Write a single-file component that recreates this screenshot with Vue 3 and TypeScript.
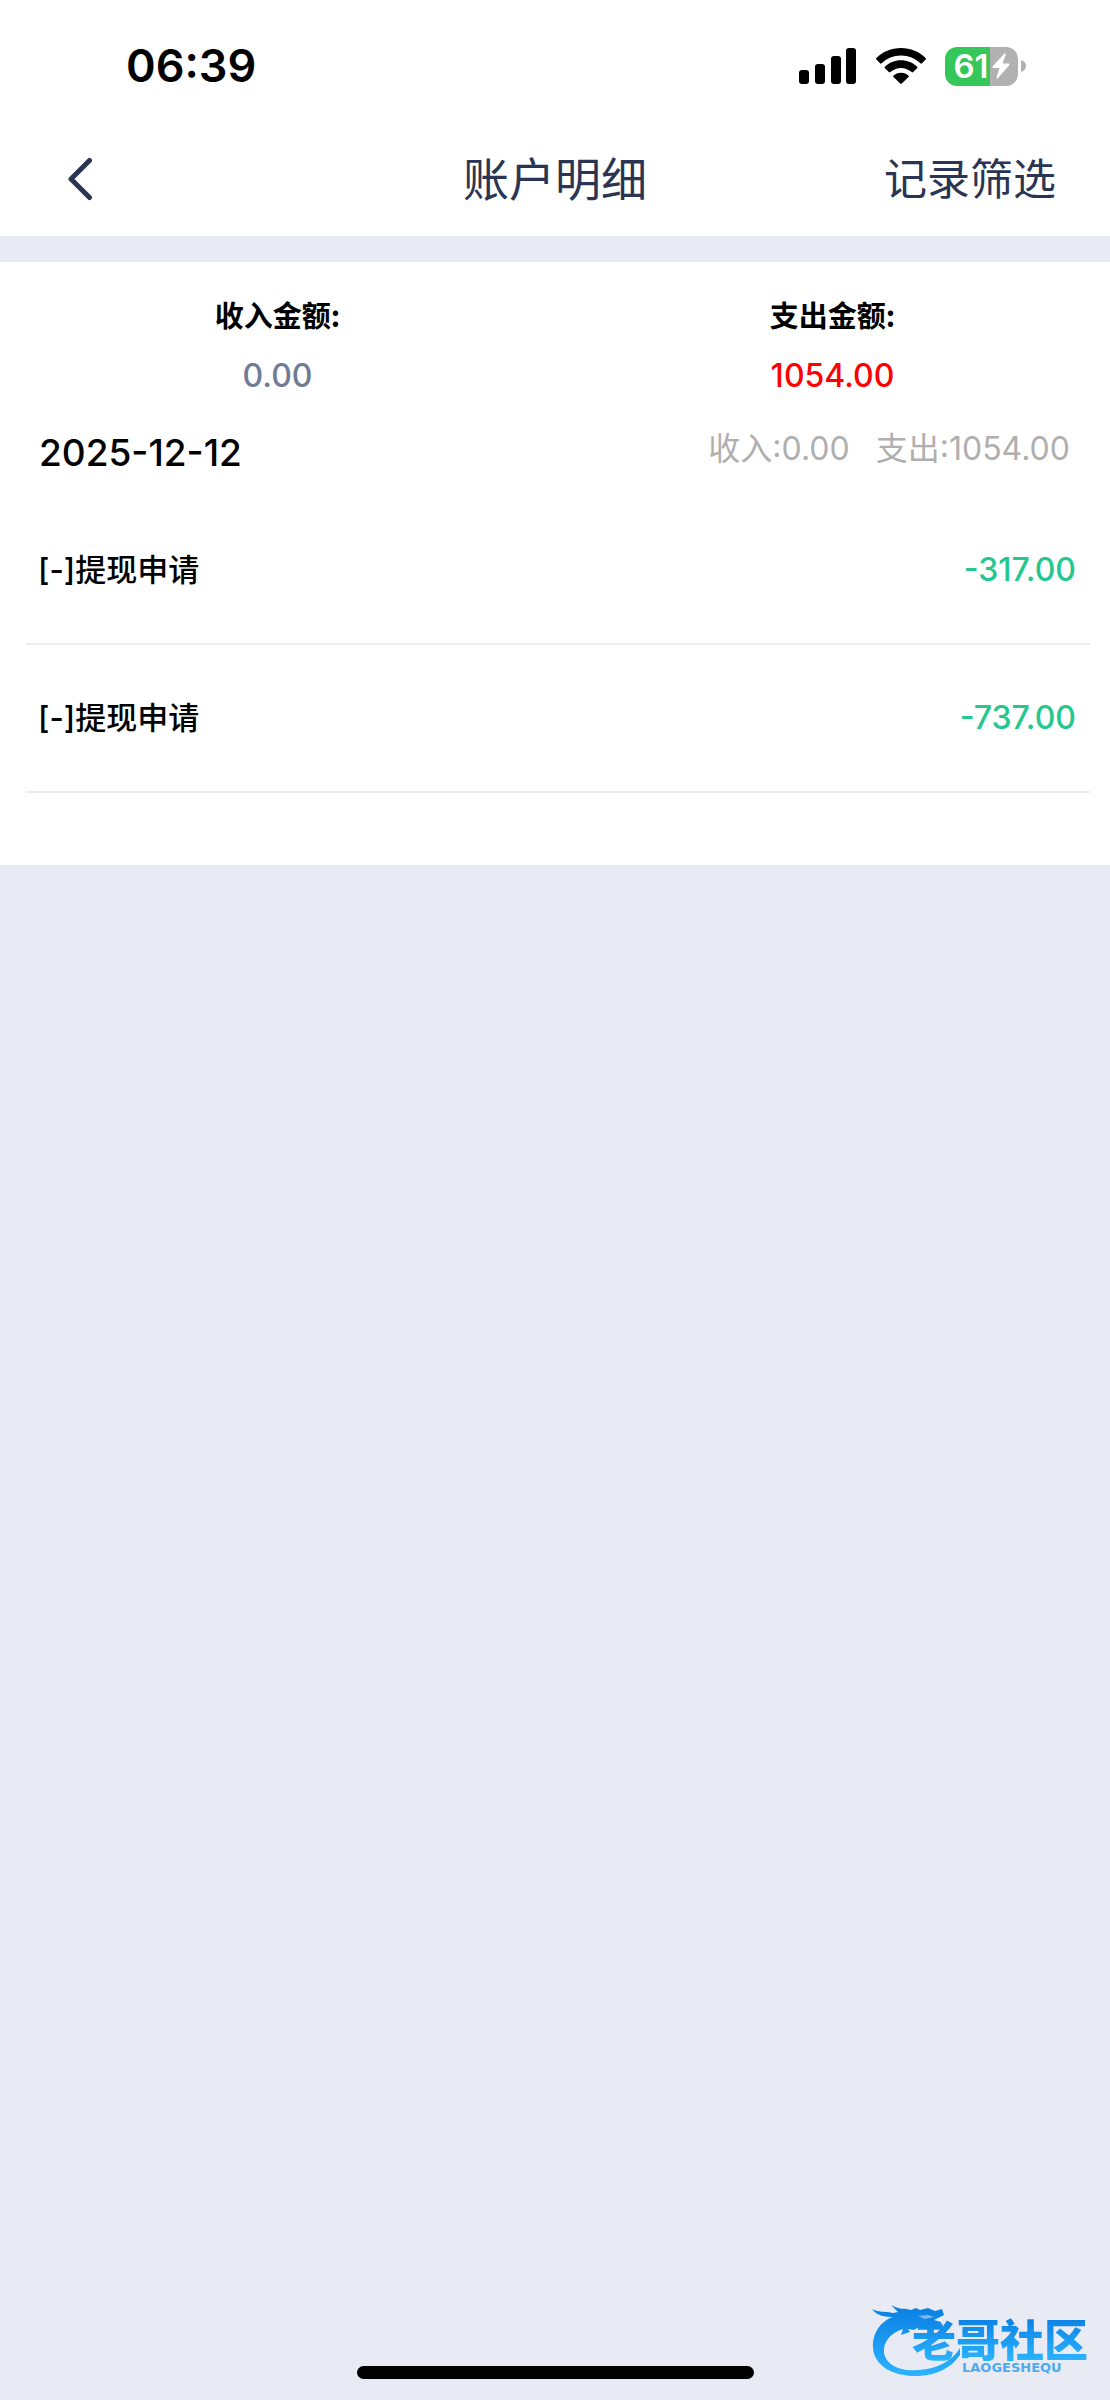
<script setup lang="ts">
interface Entry {
  id: number
  label: string
  amount: string
}

interface DayGroup {
  date: string
  income: string
  expense: string
  entries: Entry[]
}

const totals = [
  { label: '收入金额:', value: '0.00', kind: 'income' },
  { label: '支出金额:', value: '1054.00', kind: 'expense' },
]

const groups: DayGroup[] = [
  {
    date: '2025-12-12',
    income: '0.00',
    expense: '1054.00',
    entries: [
      { id: 1, label: '[-]提现申请', amount: '-317.00' },
      { id: 2, label: '[-]提现申请', amount: '-737.00' },
    ],
  },
]
</script>

<template>
  <div class="page">
    <div class="status-bar">
      <time class="clock">06:39</time>
      <div class="indicators">
        <svg class="signal" width="58" height="36" viewBox="0 0 58 36" aria-hidden="true">
          <rect x="0" y="22" width="10" height="14" rx="3" />
          <rect x="16" y="16" width="10" height="20" rx="3" />
          <rect x="32" y="8" width="10" height="28" rx="3" />
          <rect x="47" y="0" width="10" height="36" rx="3" />
        </svg>
        <svg class="wifi" width="50" height="36" viewBox="0 0 50 36" aria-hidden="true">
          <path d="M25 0C34.600 0 43.300 3.800 49.600 10C50.100 10.500 50.100 11.100 49.600 11.600L46 15.300C45.500 15.800 44.900 15.800 44.400 15.300C39.400 10.400 32.600 7.400 25 7.400S10.600 10.400 5.600 15.300C5.100 15.800 4.500 15.800 4 15.300L0.400 11.600C-0.100 11.100 -0.100 10.500 0.400 10C6.700 3.800 15.400 0 25 0Z" />
          <path d="M25 12.300C31.200 12.300 36.900 14.700 41.100 18.700C41.600 19.200 41.600 19.800 41.100 20.300L37.200 24.100C36.700 24.600 36.200 24.600 35.700 24.100C32.900 21.500 29.100 19.900 25 19.900S17.100 21.500 14.300 24.100C13.800 24.600 13.300 24.600 12.800 24.100L8.900 20.300C8.400 19.800 8.400 19.200 8.900 18.700C13.100 14.700 18.800 12.300 25 12.300Z" />
          <path d="M25 24.700C28 24.700 30.600 25.800 32.500 27.500C33 28 33 28.500 32.500 29L25.800 35.600C25.300 36.100 24.700 36.100 24.200 35.600L17.500 29C17 28.500 17 28 17.500 27.500C19.400 25.800 22 24.700 25 24.700Z" />
        </svg>
        <div class="battery">
          <div class="battery-body">
            <span>61</span>
            <svg width="18" height="26" viewBox="0 0 18 26" aria-hidden="true">
              <path d="M12.500 0.400L0.500 13.600Q0 14.800 1.200 15H7.600L4.500 24.600Q4.600 26 5.800 25.300L17.500 11.900Q18 10.700 16.800 10.500H10.500L13.800 1.500Q13.800 0 12.500 0.400Z" fill="#fff" />
            </svg>
          </div>
          <svg width="5" height="12" viewBox="0 0 5 12" aria-hidden="true">
            <path d="M0 0Q5 1.500 5 6T0 12Z" fill="#b1b1b1" />
          </svg>
        </div>
      </div>
    </div>

    <header class="nav">
      <button class="back" type="button" aria-label="返回">
        <svg width="24" height="44" viewBox="0 0 24 44" aria-hidden="true">
          <path d="M21.500 3.500L3 22L21.500 40.500" fill="none" stroke="#2a3553" stroke-width="5" stroke-linecap="round" stroke-linejoin="round" />
        </svg>
      </button>
      <h1>账户明细</h1>
      <button class="filter" type="button">记录筛选</button>
    </header>

    <main class="card">
      <dl class="totals">
        <div v-for="total in totals" :key="total.kind" class="total">
          <dt>{{ total.label }}</dt>
          <dd :class="total.kind">{{ total.value }}</dd>
        </div>
      </dl>

      <section v-for="group in groups" :key="group.date">
        <div class="day">
          <h2>{{ group.date }}</h2>
          <p class="day-sums">
            <span>收入:{{ group.income }}</span>
            <span>支出:{{ group.expense }}</span>
          </p>
        </div>
        <ul class="entries">
          <li v-for="entry in group.entries" :key="entry.id">
            <span>{{ entry.label }}</span>
            <span class="amount">{{ entry.amount }}</span>
          </li>
        </ul>
      </section>
    </main>

    <footer class="bottom">
      <div class="home-indicator"></div>
      <div class="brand">
        <svg class="dragon" width="92" height="80" viewBox="0 0 92 80" aria-hidden="true">
          <defs>
            <linearGradient id="dragon-fill" x1="0" y1="0" x2="0" y2="1">
              <stop offset="0" stop-color="#0a7ee2" />
              <stop offset="1" stop-color="#2bb4ff" />
            </linearGradient>
          </defs>
          <path fill="url(#dragon-fill)" d="M0 10C8 14 14 12 21 14L26 13L19 6C27 11 33 9 39 11L44 9L48 11L56 9L63 12L70 10L72 16L66 19L62 21L69 23L70 28L63 27L56 28L53 30L47 28L42 31L36 30L38 33L29 36L31 30C18 34 11 43 12 54C14 66 29 73 47 71C65 70 80 62 88 49V56C79 69 65 76 47 77C20 78 2 66 1 49C0 34 9 22 21 18C13 18 5 17 0 10Z" />
          <path fill="#e8ebf4" d="M46 17L56 16L62 18L53 20Z" opacity="0.500" />
        </svg>
        <div class="brand-text">
          <strong>老哥社区</strong>
          <small>LAOGESHEQU</small>
        </div>
      </div>
    </footer>
  </div>
</template>

<style>
body {
  margin: 0;
}
</style>

<style scoped>
.page {
  display: flex;
  flex-direction: column;
  min-height: 100vh;
  background: #e8ebf4;
  color: #000;
  font-family: Inter, "Noto Sans CJK SC", sans-serif;
  font-size: 32px;
  line-height: 40px;
}

h1,
h2,
p,
dl,
dd,
ul {
  margin: 0;
  padding: 0;
}

button {
  padding: 0;
  border: 0;
  background: none;
  color: inherit;
  font: inherit;
  cursor: pointer;
}

svg {
  display: block;
}

.status-bar {
  display: flex;
  align-items: center;
  justify-content: space-between;
  height: 132px;
  padding: 0 84px 0 126px;
  background: #fff;
}

.clock {
  font-size: 45px;
  font-weight: 600;
  line-height: 56px;
}

.indicators {
  display: flex;
  align-items: center;
  gap: 19px;
}

.battery {
  display: flex;
  align-items: center;
  gap: 3px;
}

.battery-body {
  display: flex;
  align-items: center;
  justify-content: center;
  gap: 3px;
  width: 73px;
  height: 39px;
  border-radius: 12px;
  background: linear-gradient(90deg, #35c759 62%, #b1b1b1 62%);
  color: #fff;
  font-size: 33px;
  font-weight: 600;
}

.nav {
  display: grid;
  grid-template-columns: 1fr auto 1fr;
  align-items: center;
  height: 94px;
  padding: 0 54px 10px;
  background: #fff;
  color: #2a3553;
}

.nav h1 {
  font-size: 46px;
  font-weight: 400;
  line-height: 56px;
}

.back {
  justify-self: start;
  padding: 0 14px;
}

.filter {
  justify-self: end;
  font-size: 43px;
  line-height: 60px;
}

.card {
  margin-top: 26px;
  padding-bottom: 72px;
  background: #fff;
}

.totals {
  display: grid;
  grid-template-columns: 1fr 1fr;
  padding-top: 32px;
  text-align: center;
}

.total {
  display: flex;
  flex-direction: column;
  gap: 22px;
}

.total dt {
  font-family: "Noto Sans CJK SC", sans-serif;
  font-size: 29px;
  font-weight: 700;
}

.income {
  color: #6f7c95;
}

.expense {
  color: #f00;
}

.day {
  display: flex;
  align-items: flex-start;
  justify-content: space-between;
  height: 68px;
  padding: 33px 40px 0 39px;
}

.day h2 {
  padding-top: 4px;
  font-size: 37px;
  font-weight: 500;
}

.day-sums {
  display: flex;
  gap: 26px;
  color: #afafaf;
}

.total dd,
.amount {
  font-weight: 500;
}

.entries {
  padding: 0 20px 0 26px;
  list-style: none;
}

.entries li {
  display: flex;
  align-items: center;
  justify-content: space-between;
  height: 146px;
  padding: 0 14px 0 12px;
  border-bottom: 2px solid #ececf1;
  font-size: 31px;
  font-weight: 500;
}

.entries .amount {
  color: #24c88f;
  font-size: 32px;
}

.bottom {
  display: grid;
  grid-template-columns: 1fr auto 1fr;
  align-items: end;
  margin-top: auto;
  padding-bottom: 21px;
}

.home-indicator {
  grid-column: 2;
  width: 397px;
  height: 13px;
  border-radius: 7px;
  background: #000;
}

.brand {
  display: flex;
  justify-self: end;
  padding-right: 18px;
}

.dragon {
  margin-right: -52px;
}

.brand-text {
  display: flex;
  flex-direction: column;
  width: 180px;
  padding-top: 16px;
}

.brand-text strong {
  background: linear-gradient(#0a7ee2, #2bb4ff);
  background-clip: text;
  color: transparent;
  font-family: "Noto Sans CJK SC", sans-serif;
  font-size: 44px;
  font-weight: 900;
  line-height: 46px;
}

.brand-text small {
  padding-left: 50px;
  color: #4fa9ee;
  font-family: "DejaVu Sans", sans-serif;
  font-size: 13px;
  font-weight: 700;
  line-height: 14px;
}
</style>
